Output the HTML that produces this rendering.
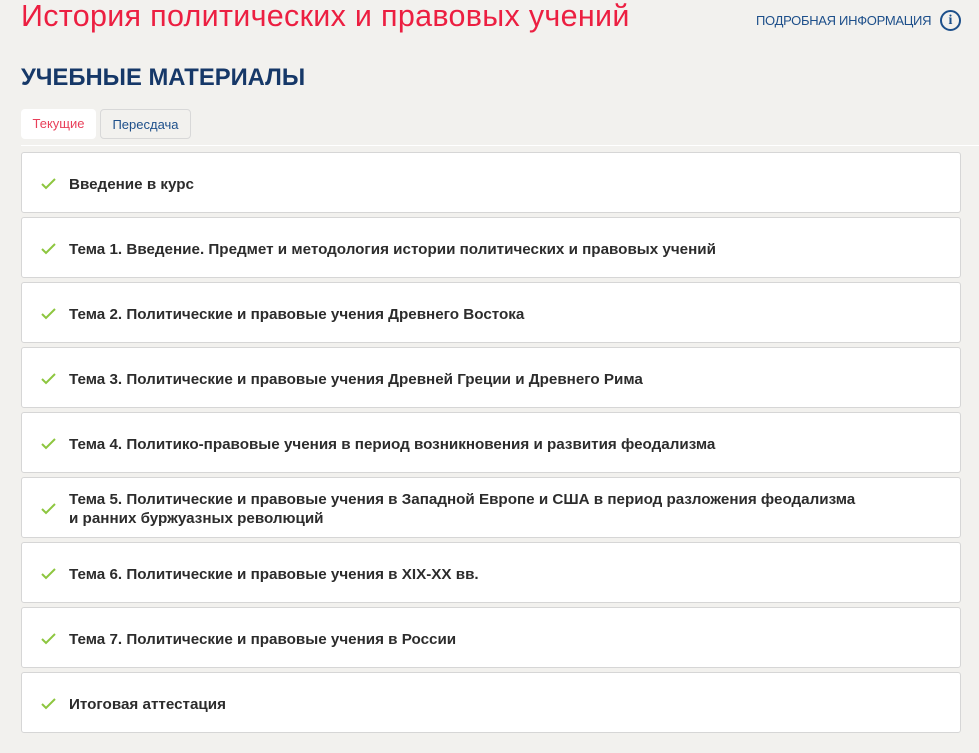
<!DOCTYPE html>
<html><head><meta charset="utf-8"><style>
body{margin:0;background:#f2f1ee;width:979px;height:753px;overflow:hidden;font-family:"Liberation Sans","DejaVu Sans",sans-serif;position:relative}
.t{position:absolute;left:21px;top:-1px;font-size:30.5px;color:#ec1f41;white-space:nowrap;letter-spacing:0.3px}
.info{position:absolute;left:756px;top:13px;font-size:13px;color:#1d4f8a;letter-spacing:-0.3px}
.ic{position:absolute;left:940px;top:10px;width:17px;height:17px;border:2px solid #1d4f8a;border-radius:50%;color:#1d4f8a;font-weight:bold;font-size:14px;text-align:center;line-height:17px;font-family:"Liberation Serif",serif}
.h{position:absolute;left:21px;top:64px;font-size:23.8px;color:#163868;font-weight:bold;letter-spacing:0}
.tab{position:absolute;top:109px;height:30px;line-height:30px;font-size:13px;box-sizing:border-box;border-radius:4px;text-align:center}
.line{position:absolute;left:21px;right:0;top:145px;height:1px;background:#fff}
.c{position:absolute;left:21px;width:940px;height:61px;box-sizing:border-box;background:#fff;border:1px solid #d6d6d6;border-radius:3px;display:flex;align-items:center}
.c svg{position:absolute;left:19px;top:25px}
.c span{margin-left:47px;margin-top:3px;font-size:15.2px;font-weight:bold;color:#2c2c2c;line-height:19px;letter-spacing:0}
</style></head><body>
<div class="t">История политических и правовых учений</div>
<div class="info">ПОДРОБНАЯ ИНФОРМАЦИЯ</div>
<div class="ic">i</div>
<div class="h">УЧЕБНЫЕ МАТЕРИАЛЫ</div>
<div class="tab" style="left:21px;width:75px;background:#fff;color:#e8405a">Текущие</div>
<div class="tab" style="left:100px;width:91px;border:1px solid #d8d8d8;color:#1d4f8a">Пересдача</div>
<div class="line"></div>
<div class="c" style="top:152px"><svg width="15" height="12" viewBox="0 0 15 12"><path d="M1 6l4 4 9-9" stroke="#8dc63f" stroke-width="2" fill="none"/></svg><span>Введение в курс</span></div>
<div class="c" style="top:217px"><svg width="15" height="12" viewBox="0 0 15 12"><path d="M1 6l4 4 9-9" stroke="#8dc63f" stroke-width="2" fill="none"/></svg><span>Тема 1. Введение. Предмет и методология истории политических и правовых учений</span></div>
<div class="c" style="top:282px"><svg width="15" height="12" viewBox="0 0 15 12"><path d="M1 6l4 4 9-9" stroke="#8dc63f" stroke-width="2" fill="none"/></svg><span>Тема 2. Политические и правовые учения Древнего Востока</span></div>
<div class="c" style="top:347px"><svg width="15" height="12" viewBox="0 0 15 12"><path d="M1 6l4 4 9-9" stroke="#8dc63f" stroke-width="2" fill="none"/></svg><span>Тема 3. Политические и правовые учения Древней Греции и Древнего Рима</span></div>
<div class="c" style="top:412px"><svg width="15" height="12" viewBox="0 0 15 12"><path d="M1 6l4 4 9-9" stroke="#8dc63f" stroke-width="2" fill="none"/></svg><span>Тема 4. Политико-правовые учения в период возникновения и развития феодализма</span></div>
<div class="c" style="top:477px"><svg width="15" height="12" viewBox="0 0 15 12"><path d="M1 6l4 4 9-9" stroke="#8dc63f" stroke-width="2" fill="none"/></svg><span>Тема 5. Политические и правовые учения в Западной Европе и США в период разложения феодализма<br>и ранних буржуазных революций</span></div>
<div class="c" style="top:542px"><svg width="15" height="12" viewBox="0 0 15 12"><path d="M1 6l4 4 9-9" stroke="#8dc63f" stroke-width="2" fill="none"/></svg><span>Тема 6. Политические и правовые учения в XIX-XX вв.</span></div>
<div class="c" style="top:607px"><svg width="15" height="12" viewBox="0 0 15 12"><path d="M1 6l4 4 9-9" stroke="#8dc63f" stroke-width="2" fill="none"/></svg><span>Тема 7. Политические и правовые учения в России</span></div>
<div class="c" style="top:672px"><svg width="15" height="12" viewBox="0 0 15 12"><path d="M1 6l4 4 9-9" stroke="#8dc63f" stroke-width="2" fill="none"/></svg><span>Итоговая аттестация</span></div>
</body></html>
